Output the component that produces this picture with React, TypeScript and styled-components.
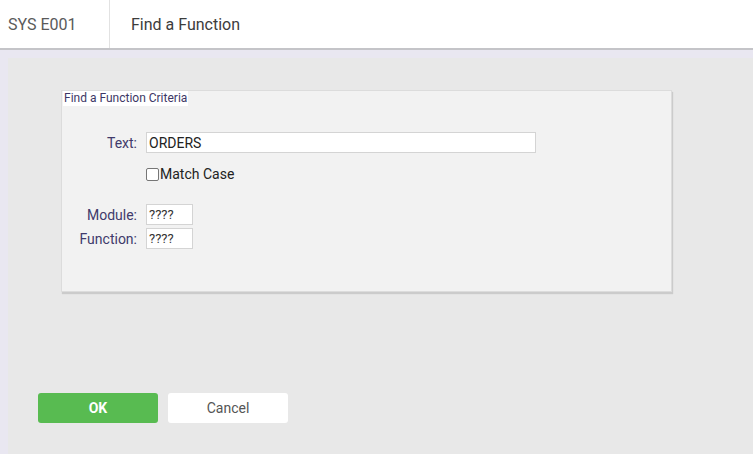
import styled, { createGlobalStyle } from "styled-components";

const GlobalStyle = createGlobalStyle`
  html, body {
    margin: 0;
    padding: 0;
    height: 100%;
  }
  body {
    font-family: Roboto, "Liberation Sans", Arial, sans-serif;
    background: #e9e7f1;
    overflow: hidden;
  }
`;

const Page = styled.div`
  width: 753px;
  height: 454px;
  display: flex;
  flex-direction: column;
  background: #e9e7f1;
`;

const Header = styled.div`
  height: 48px;
  display: flex;
  align-items: stretch;
  background: #ffffff;
  border-bottom: 2px solid #c4c4c8;
`;

const SystemId = styled.div`
  width: 101px;
  padding-left: 8px;
  display: flex;
  align-items: center;
  font-size: 16px;
  color: #5a5a5a;
  border-right: 1px solid #e2e2e2;
`;

const Title = styled.div`
  padding-left: 21px;
  display: flex;
  align-items: center;
  font-size: 16px;
  color: #3c3c3c;
`;

const Body = styled.div`
  flex: 1;
  margin: 8px 0 0 8px;
  background: #e8e8e8;
  display: flex;
  flex-direction: column;
  padding: 32px 0 0 30px;
`;

const Panel = styled.div`
  position: relative;
  margin-left: 23px;
  width: 611px;
  height: 202px;
  background: #f2f2f2;
  border: 1px solid #dcdcdc;
  box-shadow: 1px 2px 1px rgba(0, 0, 0, 0.12);
  box-sizing: border-box;
  padding: 41px 0 0 0;
`;

const Legend = styled.div`
  position: absolute;
  left: 1px;
  top: 0;
  background: #ffffff;
  color: #3d3766;
  font-size: 12px;
  padding: 1px 1px 1px 1px;
  line-height: 13px;
`;

const Row = styled.div<{ $gap?: number }>`
  display: grid;
  grid-template-columns: 75px auto;
  column-gap: 9px;
  align-items: center;
  margin-top: ${(p) => p.$gap ?? 0}px;
`;

const Label = styled.label`
  text-align: right;
  font-size: 14px;
  color: #403a6b;
`;

const Input = styled.div<{ $width: number }>`
  width: ${(p) => p.$width}px;
  height: 21px;
  box-sizing: border-box;
  background: #ffffff;
  border: 1px solid #d4d4d4;
  font-size: 14px;
  color: #222;
  padding: 0 2px;
  display: flex;
  align-items: center;
`;

const SmallInput = styled(Input)`
  font-size: 13px;
  color: #333;
`;

const CheckLine = styled.div`
  display: flex;
  align-items: center;
  font-size: 14px;
  color: #222;
`;

const Box = styled.span`
  width: 11px;
  height: 11px;
  border: 1px solid #767676;
  border-radius: 2px;
  background: #fff;
  margin-right: 1px;
`;

const Buttons = styled.div`
  display: flex;
  gap: 10px;
  margin-top: 101px;
`;

const Button = styled.div<{ $primary?: boolean }>`
  width: 120px;
  height: 30px;
  border-radius: 3px;
  display: flex;
  align-items: center;
  justify-content: center;
  font-size: 14px;
  font-weight: ${(p) => (p.$primary ? 700 : 400)};
  background: ${(p) => (p.$primary ? "#58bb51" : "#ffffff")};
  color: ${(p) => (p.$primary ? "#ffffff" : "#555555")};
`;

export default function App() {
  return (
    <>
      <GlobalStyle />
      <Page>
        <Header>
          <SystemId>SYS E001</SystemId>
          <Title>Find a Function</Title>
        </Header>
        <Body>
          <Panel>
            <Legend>Find a Function Criteria</Legend>
            <Row>
              <Label>Text:</Label>
              <Input $width={390}>ORDERS</Input>
            </Row>
            <Row $gap={13}>
              <span />
              <CheckLine>
                <Box />
                Match Case
              </CheckLine>
            </Row>
            <Row $gap={22}>
              <Label>Module:</Label>
              <SmallInput $width={47}>????</SmallInput>
            </Row>
            <Row $gap={3}>
              <Label>Function:</Label>
              <SmallInput $width={47}>????</SmallInput>
            </Row>
          </Panel>
          <Buttons>
            <Button $primary>OK</Button>
            <Button>Cancel</Button>
          </Buttons>
        </Body>
      </Page>
    </>
  );
}
